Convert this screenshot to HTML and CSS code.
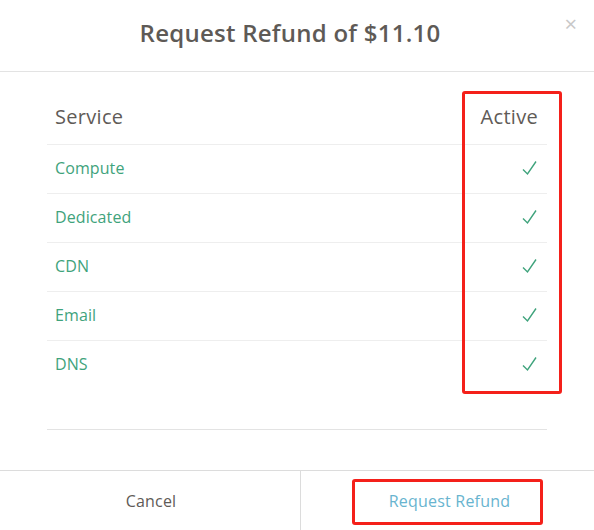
FILE: index.html
```html
<!DOCTYPE html>
<html>
<head>
<meta charset="utf-8">
<link rel="stylesheet" href="styles.css">
</head>
<body>
<div class="modal">
  <div class="modal-header">
    <h1 class="title">Request Refund of $11.10</h1>
    <span class="close">&times;</span>
  </div>
  <div class="modal-body">
    <div class="table">
      <div class="row head">
        <div class="cell">Service</div>
        <div class="cell right">Active</div>
      </div>
      <div class="row"><div class="cell name">Compute</div><div class="cell check"><svg width="15" height="16" viewBox="0 0 15 16"><path d="M1 9.5 L5.5 14 L14 1.5" fill="none" stroke="#3fa37c" stroke-width="1.4"/></svg></div></div>
      <div class="row"><div class="cell name">Dedicated</div><div class="cell check"><svg width="15" height="16" viewBox="0 0 15 16"><path d="M1 9.5 L5.5 14 L14 1.5" fill="none" stroke="#3fa37c" stroke-width="1.4"/></svg></div></div>
      <div class="row"><div class="cell name">CDN</div><div class="cell check"><svg width="15" height="16" viewBox="0 0 15 16"><path d="M1 9.5 L5.5 14 L14 1.5" fill="none" stroke="#3fa37c" stroke-width="1.4"/></svg></div></div>
      <div class="row"><div class="cell name">Email</div><div class="cell check"><svg width="15" height="16" viewBox="0 0 15 16"><path d="M1 9.5 L5.5 14 L14 1.5" fill="none" stroke="#3fa37c" stroke-width="1.4"/></svg></div></div>
      <div class="row"><div class="cell name">DNS</div><div class="cell check"><svg width="15" height="16" viewBox="0 0 15 16"><path d="M1 9.5 L5.5 14 L14 1.5" fill="none" stroke="#3fa37c" stroke-width="1.4"/></svg></div></div>
    </div>
    <div class="rule"></div>
  </div>
  <div class="modal-footer">
    <button class="btn cancel">Cancel</button>
    <button class="btn confirm">Request Refund</button>
  </div>
  <div class="mark mark-col"></div>
  <div class="mark mark-btn"></div>
</div>
</body>
</html>
```
FILE: styles.css
```css
* { box-sizing: border-box; }
html, body { margin: 0; padding: 0; background: #fff; }
body { font-family: "Open Sans", "Noto Sans", sans-serif; color: #5f5b57; }
.modal { position: relative; width: 594px; height: 530px; display: flex; flex-direction: column; }
.modal-header { position: relative; height: 72px; border-bottom: 1px solid #e3e3e3; display: flex; align-items: center; justify-content: center; }
.title { margin: 0; font-size: 24px; font-weight: 600; color: #5e5a56; letter-spacing: 0.25px; padding: 0 14px 7px 0; }
.close { position: absolute; right: 17px; top: 12px; font-size: 22px; color: #c8c8c8; line-height: 1; }
.modal-body { padding: 20px 47px 0; height: 398px; }
.row { display: flex; justify-content: space-between; align-items: center; height: 49px; border-top: 1px solid #eeeeee; }
.row.head { height: 52px; border-top: none; font-size: 20px; color: #5f5b57; letter-spacing: 0.3px; }
.row.head .cell { padding-bottom: 4px; }
.cell { padding: 0 9px 2px 8px; }
.name { font-size: 16px; color: #3fa37c; letter-spacing: 0.1px; }
.check { display: flex; padding: 0 10px 3px 0; }
.check svg { display: block; }
.rule { margin-top: 40px; border-top: 1px solid #e3e3e3; }
.modal-footer { height: 60px; border-top: 1px solid #dcdcdc; display: grid; grid-template-columns: 301px 1fr; }
.btn { background: #fff; border: none; font-family: inherit; font-size: 16px; letter-spacing: 0.2px; cursor: pointer; padding: 0; }
.cancel { color: #5f5b57; border-right: 1px solid #dcdcdc; padding-left: 2px; }
.confirm { color: #68b4cf; padding-left: 4px; }
.mark { position: absolute; border: 3px solid #f4201a; border-radius: 3px; }
.mark-col { left: 462px; top: 91px; width: 100px; height: 303px; }
.mark-btn { left: 352px; top: 479px; width: 191px; height: 46px; }
```
